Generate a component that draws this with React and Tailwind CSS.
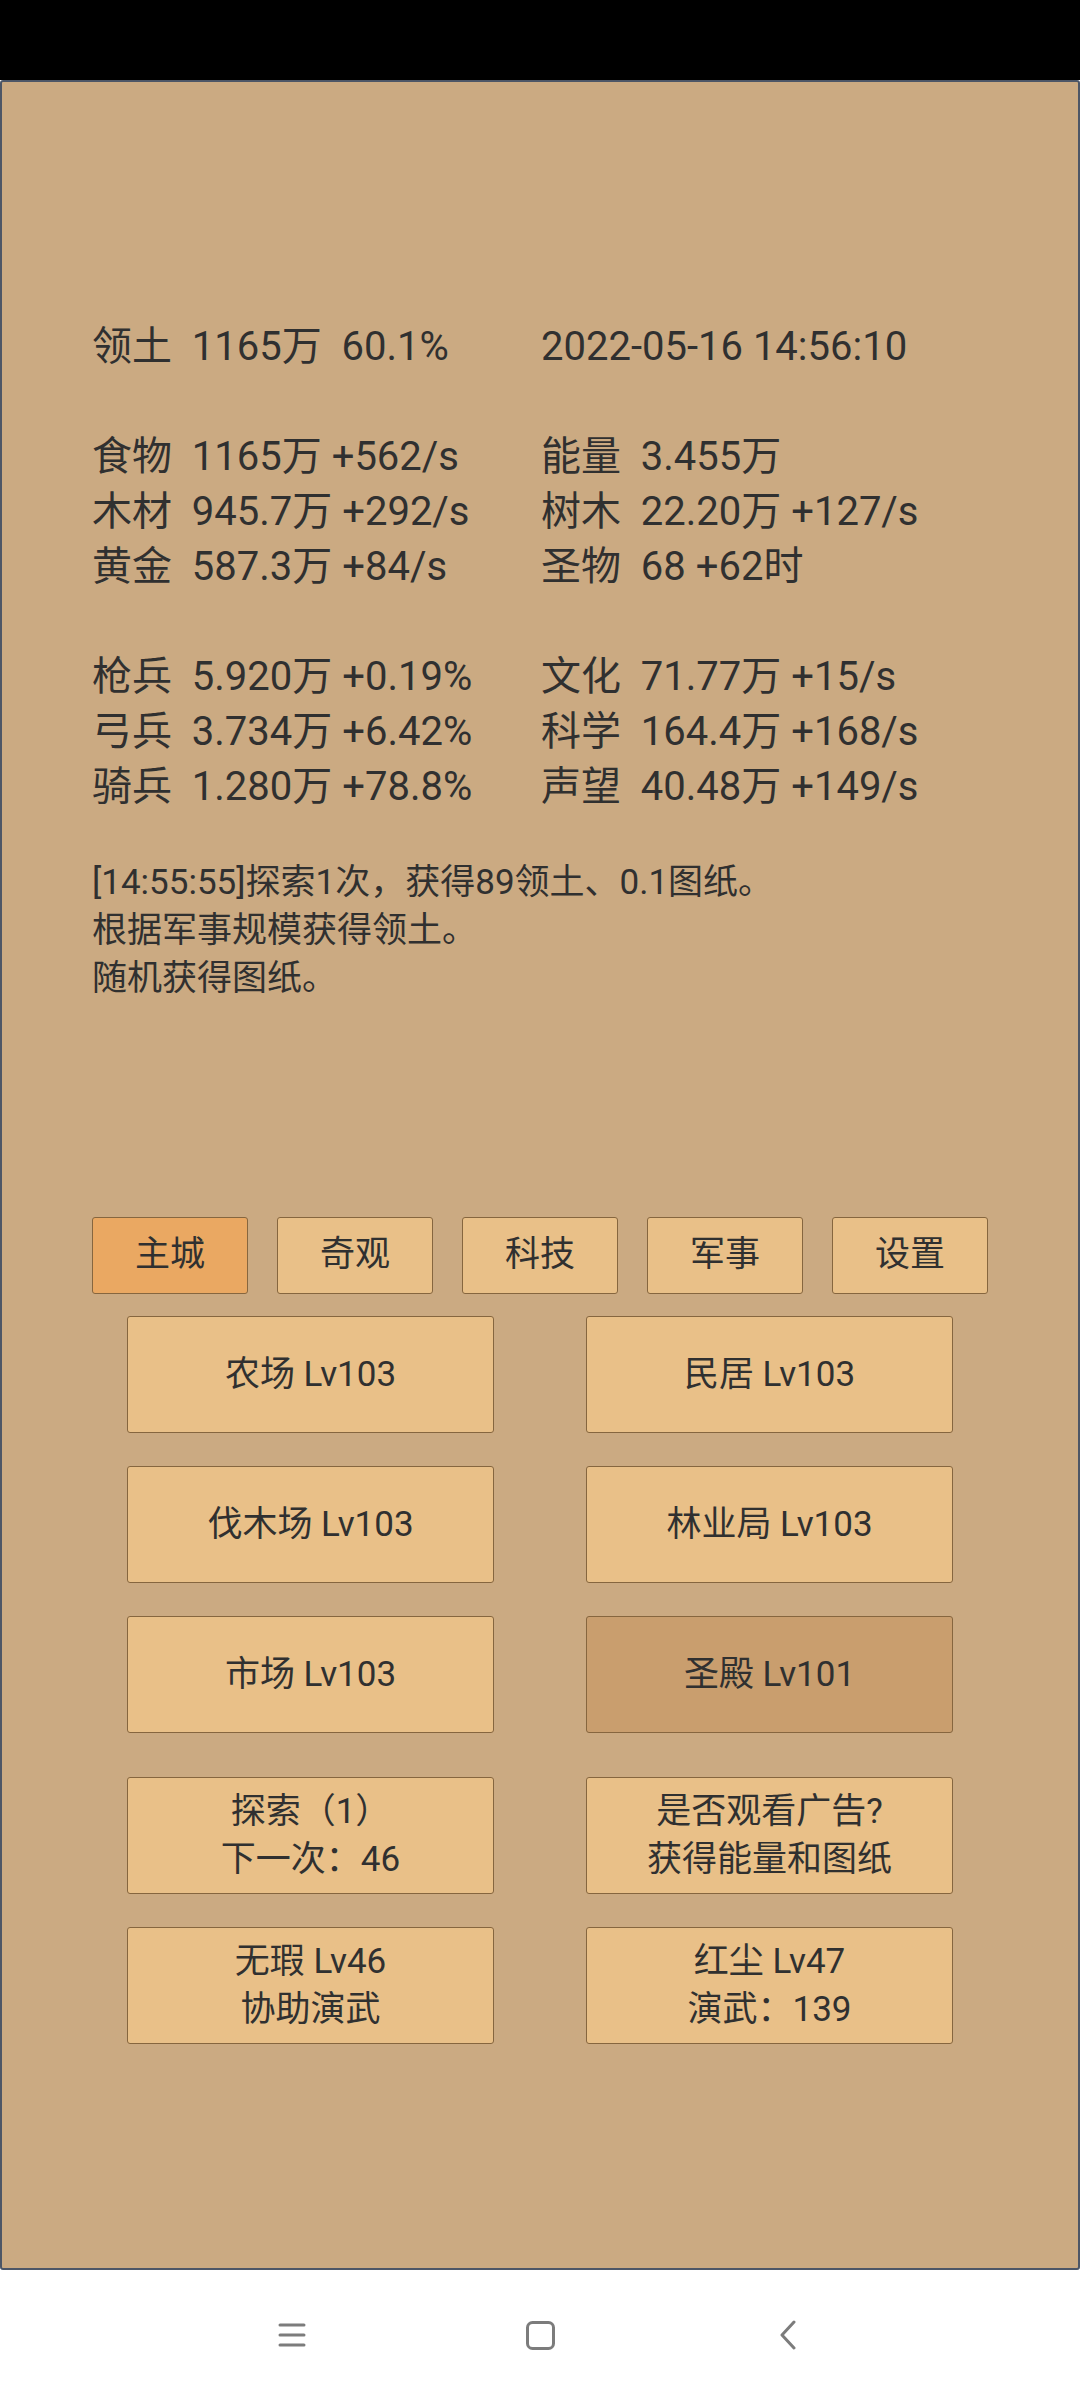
const font = { fontFamily: 'Roboto, "Noto Sans CJK SC", sans-serif' };

const leftStats = [
  ["领土  1165万  60.1%", "2022-05-16 14:56:10"],
  ["", ""],
  ["食物  1165万 +562/s", "能量  3.455万"],
  ["木材  945.7万 +292/s", "树木  22.20万 +127/s"],
  ["黄金  587.3万 +84/s", "圣物  68 +62时"],
  ["", ""],
  ["枪兵  5.920万 +0.19%", "文化  71.77万 +15/s"],
  ["弓兵  3.734万 +6.42%", "科学  164.4万 +168/s"],
  ["骑兵  1.280万 +78.8%", "声望  40.48万 +149/s"],
];

const tabs = ["主城", "奇观", "科技", "军事", "设置"];

const buildings = [
  { name: "农场 Lv103" },
  { name: "民居 Lv103" },
  { name: "伐木场 Lv103" },
  { name: "林业局 Lv103" },
  { name: "市场 Lv103" },
  { name: "圣殿 Lv101", dim: true },
];

const actions = [
  ["探索（1）", "下一次：46"],
  ["是否观看广告?", "获得能量和图纸"],
  ["无瑕 Lv46", "协助演武"],
  ["红尘 Lv47", "演武：139"],
];

function Btn({ children, dim }) {
  return (
    <button
      type="button"
      className={`h-[117px] w-[367px] rounded-[3px] border border-[#86663f] text-[35px] leading-[48px] text-[#303030] flex flex-col items-center justify-center ${
        dim ? "bg-[#c99e6e]" : "bg-[#e9c088]"
      }`}
    >
      {children}
    </button>
  );
}

export default function App() {
  return (
    <div className="w-[1080px] h-[2400px] flex flex-col bg-white" style={font}>
      {/* status bar */}
      <div className="h-[80px] bg-black" />

      {/* game panel */}
      <div className="h-[2190px] bg-[#cbaa82] border-2 border-[#4d5666] rounded-[3px] flex flex-col">
        <div className="pl-[90px] pt-[237px] text-[#303030]">
          {/* stats */}
          <div className="grid grid-cols-[449px_auto] text-[40px] leading-[55px] whitespace-pre">
            {leftStats.map(([l, r], i) => (
              <div key={i} className="contents">
                <div className="h-[55px]">{l}</div>
                <div className="h-[55px]">{r}</div>
              </div>
            ))}
          </div>

          {/* log */}
          <div className="mt-[45px] text-[35px] leading-[48px]">
            <p>[14:55:55]探索1次，获得89领土、0.1图纸。</p>
            <p>根据军事规模获得领土。</p>
            <p>随机获得图纸。</p>
          </div>
        </div>

        {/* tabs */}
        <div className="mt-[214px] flex justify-center gap-[29px]">
          {tabs.map((t, i) => (
            <button
              key={t}
              type="button"
              className={`w-[156px] h-[77px] rounded-[3px] border border-[#86663f] text-[35px] text-[#303030] flex items-center justify-center ${
                i === 0 ? "bg-[#eaa862]" : "bg-[#e9c088]"
              }`}
            >
              {t}
            </button>
          ))}
        </div>

        {/* buildings */}
        <div className="mt-[22px] grid grid-cols-[367px_367px] justify-center gap-x-[92px] gap-y-[33px]">
          {buildings.map((b) => (
            <Btn key={b.name} dim={b.dim}>
              {b.name}
            </Btn>
          ))}
        </div>

        {/* actions */}
        <div className="mt-[44px] grid grid-cols-[367px_367px] justify-center gap-x-[92px] gap-y-[33px]">
          {actions.map(([a, b]) => (
            <Btn key={a}>
              <span>{a}</span>
              <span>{b}</span>
            </Btn>
          ))}
        </div>
      </div>

      {/* nav bar */}
      <div className="flex-1 flex items-center justify-center">
        <div className="w-[248px] flex justify-center">
          <svg width="28" height="24" viewBox="0 0 28 24">
            <g stroke="#7c7c7c" strokeWidth="3" strokeLinecap="round">
              <line x1="2" y1="2" x2="26" y2="2" />
              <line x1="2" y1="12" x2="26" y2="12" />
              <line x1="2" y1="22" x2="26" y2="22" />
            </g>
          </svg>
        </div>
        <div className="w-[248px] flex justify-center">
          <svg width="29" height="29" viewBox="0 0 29 29">
            <rect x="1.5" y="1.5" width="26" height="26" rx="5" fill="none" stroke="#7c7c7c" strokeWidth="3" />
          </svg>
        </div>
        <div className="w-[248px] flex justify-center">
          <svg width="18" height="30" viewBox="0 0 18 30">
            <polyline points="15,2 3,15 15,28" fill="none" stroke="#7c7c7c" strokeWidth="3" strokeLinecap="round" strokeLinejoin="round" />
          </svg>
        </div>
      </div>
    </div>
  );
}
